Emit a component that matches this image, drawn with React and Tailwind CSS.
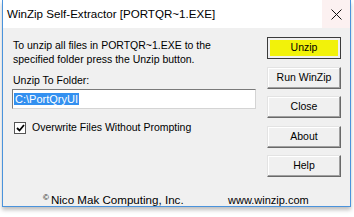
import React from 'react'

const font = { fontFamily: '"Liberation Sans", Arial, sans-serif' }

function WinButton({ children, primary }) {
  if (primary) {
    return (
      <div className="h-[22px] w-[74px] border border-[#3b3b3b] bg-[#f0f0f0] p-[2px]">
        <div className="h-full w-full bg-[#f2f20a] flex items-center justify-center text-[10.5px] text-black">
          {children}
        </div>
      </div>
    )
  }
  return (
    <div className="h-[22px] w-[74px] border-t border-l border-[#e3e3e3] border-r-[#696969] border-b-[#696969] border-r border-b bg-[#f0f0f0] shadow-[inset_-1px_-1px_0_#a0a0a0,inset_1px_1px_0_#ffffff] flex items-center justify-center text-[10.5px] text-black">
      {children}
    </div>
  )
}

export default function App() {
  return (
    <div className="w-[354px] h-[217px] bg-white overflow-hidden" style={font}>
      <div className="ml-[2px] w-[349px] h-[207px] flex flex-col border-l border-r border-b border-[#4a93dc] shadow-[0_3px_4px_rgba(0,0,0,0.25)]">
        {/* title bar */}
        <div className="h-[28px] bg-white flex items-center">
          <div className="flex-1 pl-[4px] text-[11.6px] text-black">WinZip Self-Extractor [PORTQR~1.EXE]</div>
          <div className="w-[28px] h-full bg-[#fcf1f1] flex items-center justify-center">
            <svg width="11" height="11" viewBox="0 0 11 11">
              <path d="M0.5 0.5L10.5 10.5M10.5 0.5L0.5 10.5" stroke="#111" strokeWidth="1" />
            </svg>
          </div>
        </div>

        {/* client area */}
        <div className="flex-1 bg-[#f0f0f0] flex flex-col text-[10.5px] text-black">
          <div className="flex flex-1">
            <div className="flex-1 pl-[9px] pt-[10px]">
              <div className="pl-[1px] leading-[14px]">
                <div>To unzip all files in PORTQR~1.EXE to the</div>
                <div>specified folder press the Unzip button.</div>
              </div>
              <div className="pl-[1px] mt-[7px] leading-[14px]">Unzip To Folder:</div>
              <div className="mt-[2px] w-[244px] h-[20px] bg-white border border-t-[#7a7a7a] border-l-[#7a7a7a] border-r-[#d4d4d4] border-b-[#d4d4d4] flex items-center pl-[1px]">
                <span className="bg-[#3390f0] text-white leading-[12px] px-[1px] text-[11px]">C:\PortQryUI</span>
              </div>
              <div className="mt-[11px] flex items-center gap-[6px] pl-[2px]">
                <div className="w-[12px] h-[12px] bg-white border border-[#555] flex items-center justify-center">
                  <svg width="9" height="8" viewBox="0 0 9 8">
                    <path d="M1 4L3.5 6.5L8 1" stroke="#000" strokeWidth="1.8" fill="none" />
                  </svg>
                </div>
                <span>Overwrite Files Without Prompting</span>
              </div>
            </div>
            <div className="pt-[9px] pr-[9px] flex flex-col gap-[7.5px]">
              <WinButton primary>Unzip</WinButton>
              <WinButton>Run WinZip</WinButton>
              <WinButton>Close</WinButton>
              <WinButton>About</WinButton>
              <WinButton>Help</WinButton>
            </div>
          </div>
          <div className="h-[13px] flex items-start text-[11px]">
            <div className="pl-[40px] w-[225px] flex items-start">
              <span className="text-[8px] leading-[10px] mr-[2px]">©</span>
              <span className="leading-[14px] text-[11.6px]">Nico Mak Computing, Inc.</span>
            </div>
            <span className="leading-[14px]">www.winzip.com</span>
          </div>
        </div>
      </div>
    </div>
  )
}
